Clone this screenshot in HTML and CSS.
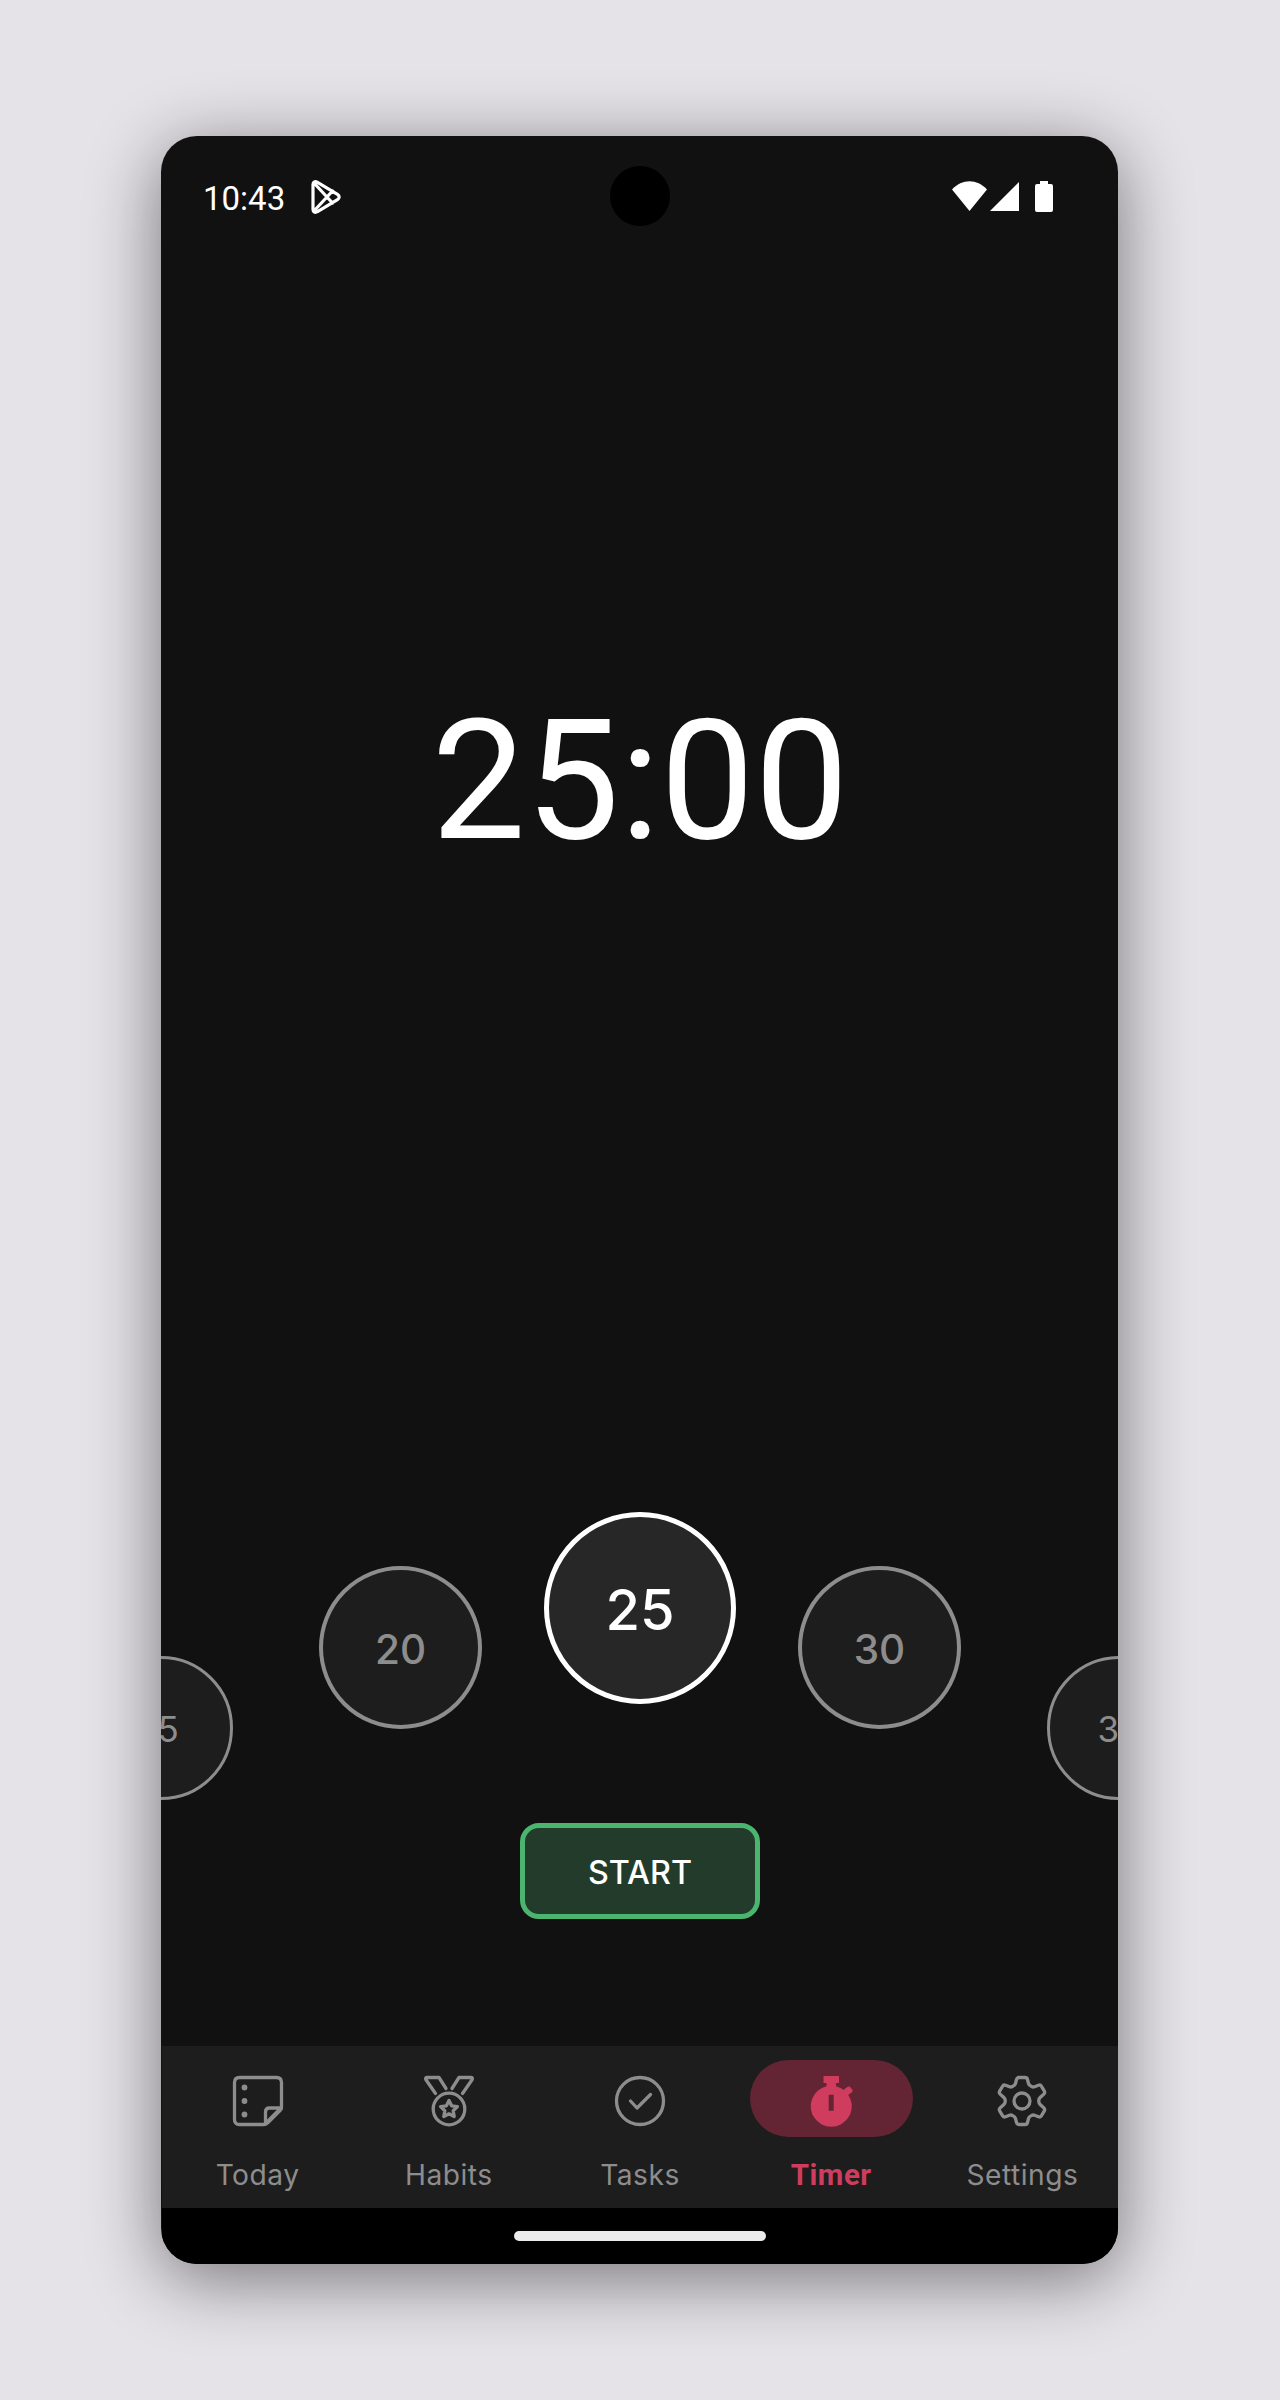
FILE: index.html
```html
<!DOCTYPE html>
<html lang="en">
<head>
<meta charset="utf-8">
<title>Timer</title>
<link rel="stylesheet" href="styles.css">
</head>
<body>
<main class="phone">
  <header class="status">
    <div class="status-left">
      <span class="clock">10:43</span>
      <svg class="play" viewBox="0 0 30 34" fill="none" stroke="#fff" stroke-width="3.200" stroke-linejoin="round" stroke-linecap="round"><path d="M2 4.500v25c0 2.500 2 3.500 4.500 2.200L26.500 19.700c2.200-1.400 2.200-4 0-5.400L6.500 2.300C4 1 2 2 2 4.500zM3 3l18.500 20M3 31l18.500-20"/></svg>
    </div>
    <span class="camera"></span>
    <div class="status-right">
      <svg class="wifi" viewBox="0 0 35 30" fill="#fff"><path d="M17.500 30 0 8.500C10-2.500 25-2.500 35 8.500z"/></svg>
      <svg class="signal" viewBox="0 0 29 29" fill="#fff"><path d="M29 0v29H0z"/></svg>
      <svg class="battery" viewBox="0 0 18 31" fill="#fff"><path d="M5 0h8v3h3q2 0 2 2v24q0 2-2 2H2q-2 0-2-2V5q0-2 2-2h3z"/></svg>
    </div>
  </header>
  <section class="time">25:00</section>
  <section class="dial">
    <div class="dot far">15</div>
    <div class="dot near">20</div>
    <div class="dot current">25</div>
    <div class="dot near">30</div>
    <div class="dot far">35</div>
  </section>
  <section class="actions"><button class="start">START</button></section>
  <nav class="nav">
    <a class="item">
      <span class="pill"><svg class="icon" viewBox="0 0 50 50"><path d="M6.500 1.500h37q5 0 5 5V31q0 2-1.500 3.500l-12 12q-2 2-4 2H6.500q-5 0-5-5v-37q0-5 5-5z"/><path d="M32.500 48V36q0-4 4-4h12M33 47l14.500-14.500"/><g class="solid"><circle cx="11.500" cy="11.500" r="2.900"/><circle cx="11.500" cy="25" r="2.900"/><circle cx="11.500" cy="38.500" r="2.900"/></g></svg></span>
      <span class="label">Today</span>
    </a>
    <a class="item">
      <span class="pill"><svg class="icon" viewBox="0 0 50 50"><circle cx="25" cy="33" r="15.800"/><path d="M11.500 17.500 1.800 3.500Q1 1.500 3 1.500H15L22 12.500M38.500 17.500 48.200 3.500Q49 1.500 47 1.500H35L28 12.500"/><path d="m25 24.500 2.600 5.300 5.800.8-4.200 4.100 1 5.800-5.200-2.700-5.200 2.700 1-5.800-4.200-4.100 5.800-.8z"/></svg></span>
      <span class="label">Habits</span>
    </a>
    <a class="item">
      <span class="pill"><svg class="icon" viewBox="0 0 50 50"><circle cx="25" cy="25" r="23.500"/><path d="m15.500 25 6.500 7 13.500-13.500"/></svg></span>
      <span class="label">Tasks</span>
    </a>
    <a class="item active">
      <span class="pill"><svg class="icon" viewBox="0 0 50 50"><g class="solid"><path fill-rule="evenodd" d="M17.500 0h15.500v7h-3v3.300A20.500 20.500 0 1 1 20.500 10.300V7h-3zM22.700 18.800v16h5v-16z"/><path d="m35 15.500 7.200-5 4.400 5.200-6.600 4.800z"/></g><path class="solid" d="m39.500 12.500 4-2.200 3.500 4.200-3.500 3z"/></svg></span>
      <span class="label">Timer</span>
    </a>
    <a class="item">
      <span class="pill"><svg class="icon" viewBox="0 0 50 50"><circle cx="25" cy="25" r="8"/><path d="M22 1.500h6q2 0 2.500 2l1 4q.5 2 3 3 1.500.8 3 .3l4-1.500q2-.8 3 1l2.700 4.500q1.200 2-.5 3.500l-3 2.600q-2 1.600-2 4.100t2 4.100l3 2.600q1.700 1.500.5 3.500l-2.700 4.500q-1 1.800-3 1l-4-1.500q-1.500-.5-3 .3-2.500 1-3 3l-1 4q-.5 2-2.500 2h-6q-2 0-2.500-2l-1-4q-.5-2-3-3-1.500-.8-3-.3l-4 1.500q-2 .8-3-1l-2.700-4.500q-1.200-2 .5-3.500l3-2.600q2-1.600 2-4.100t-2-4.100l-3-2.600q-1.700-1.500-.5-3.500l2.700-4.500q1-1.800 3-1l4 1.500q1.500.5 3-.3 2.500-1 3-3l1-4q.5-2 2.500-2z"/></svg></span>
      <span class="label">Settings</span>
    </a>
  </nav>
  <footer class="home"><span class="handle"></span></footer>
</main>
</body>
</html>
```
FILE: styles.css
```css
* { box-sizing: border-box; }
body {
  margin: 0;
  padding: 136px 0 0 161px;
  height: 2400px;
  background: #e5e2e8;
  font-family: Inter, sans-serif;
}
.phone {
  display: flex;
  flex-direction: column;
  width: 957px;
  height: 2128px;
  padding-left: 1px;
  border-radius: 36px;
  background: #111;
  overflow: hidden;
  box-shadow: 0 14px 72px rgba(0, 0, 0, .49);
}
.status {
  display: grid;
  grid-template-columns: 1fr 60px 1fr;
  align-items: center;
  height: 120px;
  padding: 0 65px 0 41px;
}
.status-left { display: flex; align-items: center; gap: 26px; }
.clock { font-family: Roboto, sans-serif; font-size: 33px; line-height: 40px; color: #fff; padding-top: 6px; }
.play { width: 30px; height: 34px; margin-top: 2px; }
.camera { width: 60px; height: 60px; margin-left: 12px; border-radius: 50%; background: #000; }
.status-right { display: flex; justify-content: flex-end; align-items: center; }
.wifi { width: 35px; height: 30px; margin-right: 3px; }
.signal { width: 29px; height: 29px; margin-right: 16px; }
.battery { width: 18px; height: 31px; }
.time {
  height: 1256px;
  padding-top: 427px;
  font-family: Roboto, sans-serif;
  font-size: 167.500px;
  line-height: 196px;
  text-align: center;
  color: #fff;
}
.dial {
  display: flex;
  justify-content: center;
  align-items: flex-start;
  height: 311px;
}
.dot {
  display: flex;
  flex: none;
  align-items: center;
  justify-content: center;
  padding-top: 3px;
  border-radius: 50%;
  border: 4px solid #8d8d8d;
  background: #1d1d1d;
  color: #8d8d8d;
}
.far { width: 144px; height: 144px; margin-top: 143.500px; border-width: 3.500px; font-size: 35px; }
.near { width: 163px; height: 163px; margin-top: 54px; font-size: 40.500px; font-weight: 450; }
.far:first-child { margin-right: 86px; }
.far:last-child { margin-left: 86px; }
.current { width: 192px; height: 192px; margin: 0 62px; border: 5px solid #fff; background: #272727; color: #fff; font-size: 56px; font-weight: 500; }
.actions { display: flex; flex: 1; justify-content: center; align-items: flex-start; }
.start {
  width: 240px;
  height: 96px;
  padding: 2px 0 0;
  border: 5px solid #4bb46e;
  border-radius: 19px;
  background: #233b2a;
  color: #fff;
  font: 500 32.300px Inter, sans-serif;
}
.nav { display: grid; grid-template-columns: repeat(5, 1fr); height: 162px; padding-top: 14px; background: #1d1d1d; }
.item { display: flex; flex-direction: column; align-items: center; color: #8d8d8d; }
.pill { display: flex; align-items: center; justify-content: center; width: 163px; height: 77px; padding-top: 4px; border-radius: 39px; }
.icon { width: 50px; height: 50px; overflow: visible; fill: none; stroke: currentColor; stroke-width: 3.300; stroke-linecap: round; stroke-linejoin: round; }
.solid { fill: currentColor; stroke: none; }
.label { margin-top: 21px; font-size: 28.200px; line-height: 34px; letter-spacing: .5px; }
.active { color: #cf3c5e; }
.active .pill { background: #632534; }
.active .label { font-family: Roboto, sans-serif; font-size: 29.500px; font-weight: 700; letter-spacing: .5px; }
.home { display: flex; justify-content: center; height: 56px; padding-top: 23px; background: #000; }
.handle { width: 252px; height: 10px; border-radius: 5px; background: #ececec; }
```
